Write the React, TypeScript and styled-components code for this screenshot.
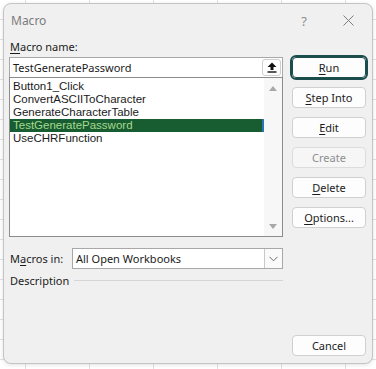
import React from 'react';
import styled, { createGlobalStyle } from 'styled-components';

const FONT = '"Noto Sans", "Open Sans", "Liberation Sans", sans-serif';
const LIST_FONT = '"Liberation Sans", Arial, sans-serif';

const GlobalStyle = createGlobalStyle`
  html, body {
    margin: 0;
    padding: 0;
  }
  body {
    width: 376px;
    height: 369px;
    overflow: hidden;
    font-family: ${FONT};
    background-color: #ffffff;
    background-image:
      repeating-linear-gradient(to right, transparent 0 25px, #e2e2e2 25px 26px, transparent 26px 64px),
      repeating-linear-gradient(to bottom, transparent 0 19px, #e2e2e2 19px 20px);
  }
`;

const Dialog = styled.div`
  box-sizing: border-box;
  margin: 3px 0 0 3px;
  width: 370px;
  height: 361px;
  display: flex;
  flex-direction: column;
  background: #f0f0f0;
  border: 1px solid #c4c4c4;
  border-radius: 8px;
  box-shadow: 0 1px 4px rgba(0, 0, 0, 0.12);
  color: #1b1b1b;
  font-size: 11px;
`;

const TitleBar = styled.div`
  height: 35px;
  display: flex;
  align-items: center;
  padding: 0 0 2px 7px;
  box-sizing: border-box;
`;

const Title = styled.span`
  flex: 1;
  font-size: 12px;
  color: #7c7c7c;
`;

const HelpMark = styled.span`
  font-size: 13px;
  color: #8c8c8c;
  margin-right: 36px;
`;

const CloseGlyph = styled.svg`
  margin-right: 18px;
`;

const Body = styled.div`
  flex: 1;
  display: flex;
  gap: 9px;
  padding: 0 6px 7px 5px;
`;

const LeftColumn = styled.div`
  width: 274px;
  display: flex;
  flex-direction: column;
`;

const RightColumn = styled.div`
  width: 74px;
  display: flex;
  flex-direction: column;
  gap: 9px;
  padding-top: 18px;
`;

const Label = styled.div`
  height: 16px;
  line-height: 16px;
  padding-left: 1px;
  margin-bottom: 2px;
  white-space: nowrap;
`;

const Key = styled.span`
  text-decoration: underline;
  text-underline-offset: 2px;
`;

const NameBox = styled.div`
  box-sizing: border-box;
  height: 20px;
  display: flex;
  align-items: center;
  background: #ffffff;
  border: 1px solid #a8a8a8;
  border-bottom: none;
  padding: 0 1px 0 3px;
`;

const NameText = styled.span`
  flex: 1;
`;

const UpButton = styled.div`
  width: 19px;
  height: 17px;
  box-sizing: border-box;
  display: flex;
  align-items: center;
  justify-content: center;
  border: 1px solid #cfcfcf;
  border-radius: 3px;
  background: #ffffff;
`;

const List = styled.div`
  box-sizing: border-box;
  height: 160px;
  display: flex;
  background: #ffffff;
  border: 1px solid #8c8c8c;
`;

const Items = styled.div`
  flex: 1;
  padding-top: 2px;
  font-family: ${LIST_FONT};
  font-size: 11.5px;
`;

const Item = styled.div<{ $selected?: boolean }>`
  height: 13px;
  line-height: 13px;
  padding-left: 3px;
  white-space: nowrap;
  ${({ $selected }) => $selected && `
    background: #185c31;
    color: #a6d98e;
    box-shadow: inset -2px 0 0 #2a74b4;
  `}
`;

const ScrollTrack = styled.div`
  width: 18px;
  display: flex;
  flex-direction: column;
  justify-content: space-between;
  align-items: center;
  padding: 8px 0 7px;
  background: #f7f7f7;
`;

const Arrow = styled.div<{ $down?: boolean }>`
  width: 0;
  height: 0;
  border-left: 4px solid transparent;
  border-right: 4px solid transparent;
  ${({ $down }) => ($down ? 'border-top: 5px solid #a8a8a8;' : 'border-bottom: 5px solid #a8a8a8;')}
`;

const Row = styled.div`
  display: flex;
  align-items: center;
  margin-top: 11px;
`;

const RowLabel = styled.span`
  width: 62px;
  padding-left: 1px;
`;

const Combo = styled.div`
  box-sizing: border-box;
  flex: 1;
  height: 21px;
  display: flex;
  align-items: center;
  background: #ffffff;
  border: 1px solid #a8a8a8;
  padding-left: 3px;
`;

const ComboText = styled.span`
  flex: 1;
`;

const ComboDrop = styled.div`
  width: 17px;
  height: 19px;
  display: flex;
  align-items: center;
  justify-content: center;
  border-left: 1px solid #c8c8c8;
  background: #fafafa;
`;

const DescRow = styled.div`
  display: flex;
  align-items: center;
  height: 16px;
  margin-top: 3px;
  padding-left: 1px;
`;

const Rule = styled.div`
  flex: 1;
  height: 1px;
  margin-left: 5px;
  background: #d6d6d6;
`;

const Button = styled.div<{ $primary?: boolean; $disabled?: boolean }>`
  box-sizing: border-box;
  height: 21px;
  display: flex;
  align-items: center;
  justify-content: center;
  background: ${({ $disabled }) => ($disabled ? '#f6f6f6' : '#fdfdfd')};
  color: ${({ $disabled }) => ($disabled ? '#8e8e8e' : '#1b1b1b')};
  border: 1px solid ${({ $disabled }) => ($disabled ? '#dcdcdc' : '#d0d0d0')};
  border-radius: 4px;
  ${({ $primary }) => $primary && 'outline: 2px solid #1c4d4d; outline-offset: 0; border-color: #1c4d4d;'}
`;

const CancelButton = styled(Button)`
  margin-top: auto;
`;

const macros = [
  'Button1_Click',
  'ConvertASCIIToCharacter',
  'GenerateCharacterTable',
  'TestGeneratePassword',
  'UseCHRFunction',
];

export default function App() {
  return (
    <>
      <GlobalStyle />
      <Dialog>
        <TitleBar>
          <Title>Macro</Title>
          <HelpMark>?</HelpMark>
          <CloseGlyph width="11" height="11" viewBox="0 0 11 11">
            <path d="M0.5 0.5 L10.5 10.5 M10.5 0.5 L0.5 10.5" stroke="#7d7d7d" strokeWidth="1" />
          </CloseGlyph>
        </TitleBar>
        <Body>
          <LeftColumn>
            <Label><Key>M</Key>acro name:</Label>
            <NameBox>
              <NameText>TestGeneratePassword</NameText>
              <UpButton>
                <svg width="10" height="11" viewBox="0 0 10 11">
                  <path d="M5 0.5 L9.5 5 L6.5 5 L6.5 8 L3.5 8 L3.5 5 L0.5 5 Z" fill="#111" />
                  <rect x="0.5" y="9.3" width="9" height="1.4" fill="#111" />
                </svg>
              </UpButton>
            </NameBox>
            <List>
              <Items>
                {macros.map((m) => (
                  <Item key={m} $selected={m === 'TestGeneratePassword'}>{m}</Item>
                ))}
              </Items>
              <ScrollTrack>
                <Arrow />
                <Arrow $down />
              </ScrollTrack>
            </List>
            <Row>
              <RowLabel>M<Key>a</Key>cros in:</RowLabel>
              <Combo>
                <ComboText>All Open Workbooks</ComboText>
                <ComboDrop>
                  <svg width="9" height="6" viewBox="0 0 9 6">
                    <path d="M0.5 0.8 L4.5 4.8 L8.5 0.8" fill="none" stroke="#6e6e6e" strokeWidth="1" />
                  </svg>
                </ComboDrop>
              </Combo>
            </Row>
            <DescRow>
              <span>Description</span>
              <Rule />
            </DescRow>
          </LeftColumn>
          <RightColumn>
            <Button $primary><Key>R</Key>un</Button>
            <Button><Key>S</Key>tep Into</Button>
            <Button><Key>E</Key>dit</Button>
            <Button $disabled>Create</Button>
            <Button><Key>D</Key>elete</Button>
            <Button><Key>O</Key>ptions...</Button>
            <CancelButton>Cancel</CancelButton>
          </RightColumn>
        </Body>
      </Dialog>
    </>
  );
}
